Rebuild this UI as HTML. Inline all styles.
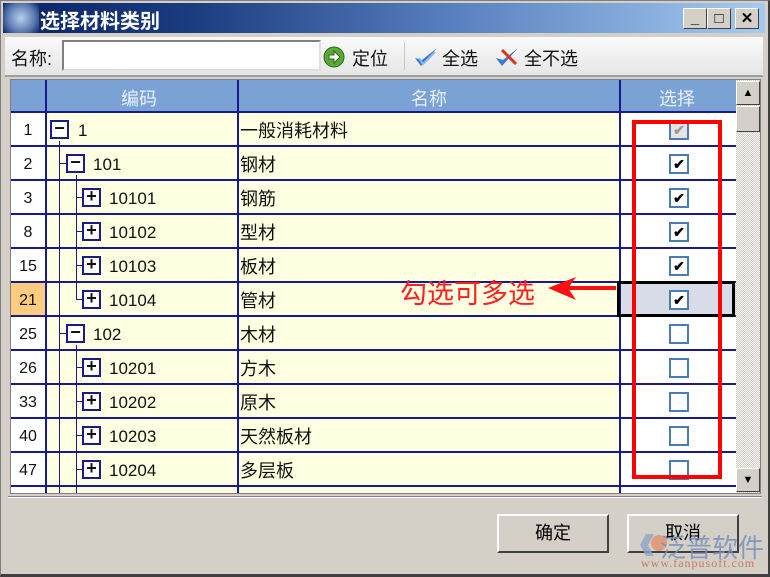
<!DOCTYPE html>
<html><head><meta charset="utf-8"><style>
*{margin:0;padding:0;box-sizing:border-box}
body{width:770px;height:577px;overflow:hidden;background:#d4d0c8;font-family:"Liberation Sans","Noto Sans CJK SC",sans-serif;position:relative}
.a{position:absolute}
#win{left:0;top:0;width:770px;height:577px;border:1px solid #808080;border-bottom:3px solid #404040;border-right:2px solid #404040;background:#d4d0c8}
#title{left:3px;top:3px;width:762px;height:30px;background:linear-gradient(90deg,#0a246a 0%,#1c3c80 25%,#5a82c0 60%,#a6caf0 100%)}
#title .t{left:37px;top:2px;color:#fff;font-weight:bold;font-size:20px}
.tb{width:24px;height:21px;top:6px;background:#d4d0c8;border:1px solid;border-color:#fff #404040 #404040 #fff;font-size:15px;font-weight:bold;text-align:center;line-height:19px;color:#000}
#tool{left:5px;top:37px;width:758px;height:40px;background:linear-gradient(#fafafa,#e6e6e6);border-bottom:2px solid #a0a0a0}
.tx{font-size:18px;color:#111}
#grid{left:10px;top:79px;width:751px;height:415px;background:#fff;overflow:hidden;border:1px solid #808080}
.row{position:absolute;left:0;width:725px;height:34px;border-bottom:2px solid #1a1a90}
.c{position:absolute;top:0;height:32px;line-height:36px;font-size:17px;color:#111}
.num{left:0;width:34px;background:#fff;text-align:center;font-size:16px}
.code{left:34px;width:192px;background:#ffffe2}
.name{left:226px;width:382px;background:#ffffe2;padding-left:3px;font-size:18px}
.sel{left:608px;width:117px;background:#fff}
.box{position:absolute;width:19px;height:19px;border:2px solid #1a1a90;background:#fff;top:7px;font-size:18px;line-height:13px;text-align:center;font-weight:bold;color:#111}
.cb{position:absolute;left:50px;top:7px;width:20px;height:20px;border:2px solid #4a7cb0;background:#fff;font-size:14px;line-height:16px;text-align:center;color:#000;font-weight:bold}
.tl{position:absolute;background:#1a1a90}
</style></head><body>
<div id="win" class="a"></div>
<div id="title" class="a">
 <div class="a" style="left:0;top:0;width:36px;height:30px;background:radial-gradient(circle at 50% 50%,#b8d0ea 0%,#5a78b0 60%,#0a246a 100%)"></div>
 <div class="a t">选择材料类别</div>
</div>
<div class="a tb" style="left:683px;top:8px">_</div>
<div class="a tb" style="left:707px;top:8px">□</div>
<div class="a tb" style="left:735px;top:8px">✕</div>
<div id="tool" class="a">
 <div class="a tx" style="left:6px;top:8px">名称:</div>
 <div class="a" style="left:57px;top:3px;width:259px;height:31px;background:#fff;border:2px solid;border-color:#808080 #e0e0e0 #e0e0e0 #808080"></div>
 <svg class="a" style="left:318px;top:9px" width="22" height="22" viewBox="0 0 22 22"><circle cx="11" cy="11" r="10" fill="#5aa838" stroke="#2a6a18"/><path d="M6 9h5V5l6 6-6 6v-4H6z" fill="#fff" stroke="#2a6a18"/></svg>
 <div class="a tx" style="left:347px;top:8px">定位</div>
 <div class="a" style="left:399px;top:5px;width:1px;height:28px;background:#c8c8c8"></div>
 <svg class="a" style="left:408px;top:9px" width="26" height="24" viewBox="0 0 26 24"><path d="M2 12l6 8L24 2 9 14z" fill="#3a78d0"/><path d="M6 12l4 6L22 6" stroke="#8ab8f0" stroke-width="2" fill="none"/></svg>
 <div class="a tx" style="left:437px;top:8px">全选</div>
 <svg class="a" style="left:489px;top:9px" width="26" height="24" viewBox="0 0 26 24"><path d="M2 12l6 8L24 2 9 14z" fill="#3a78d0"/><path d="M8 4l14 14" stroke="#e03020" stroke-width="3"/></svg>
 <div class="a tx" style="left:519px;top:8px">全不选</div>
</div>
<div id="grid" class="a">
 <div class="a" style="left:0;top:0;width:725px;height:33px;background:#7ba2d4;border-bottom:2px solid #1a1a90"></div>
 <div class="a" style="left:34px;top:0;width:2px;height:33px;background:#1a1a90"></div>
 <div class="a" style="left:226px;top:0;width:2px;height:33px;background:#1a1a90"></div>
 <div class="a" style="left:608px;top:0;width:2px;height:33px;background:#1a1a90"></div>
 <div class="a" style="left:110px;top:5px;color:#e8f0ff;font-size:18px">编码</div>
 <div class="a" style="left:400px;top:5px;color:#e8f0ff;font-size:18px">名称</div>
 <div class="a" style="left:648px;top:5px;color:#e8f0ff;font-size:18px">选择</div>

 <div class="row" style="top:33px"><div class="c num">1</div><div class="c code"><div class="box" style="left:5px">−</div><span style="position:absolute;left:33px">1</span></div><div class="c name">一般消耗材料</div><div class="c sel"><div class="cb" style="background:#e4e4e4;color:#999">✔</div></div></div>
 <div class="row" style="top:67px"><div class="c num">2</div><div class="c code"><div class="box" style="left:21px">−</div><span style="position:absolute;left:48px">101</span></div><div class="c name">钢材</div><div class="c sel"><div class="cb">✔</div></div></div>
 <div class="row" style="top:101px"><div class="c num">3</div><div class="c code"><div class="box" style="left:37px">+</div><span style="position:absolute;left:64px">10101</span></div><div class="c name">钢筋</div><div class="c sel"><div class="cb">✔</div></div></div>
 <div class="row" style="top:135px"><div class="c num">8</div><div class="c code"><div class="box" style="left:37px">+</div><span style="position:absolute;left:64px">10102</span></div><div class="c name">型材</div><div class="c sel"><div class="cb">✔</div></div></div>
 <div class="row" style="top:169px"><div class="c num">15</div><div class="c code"><div class="box" style="left:37px">+</div><span style="position:absolute;left:64px">10103</span></div><div class="c name">板材</div><div class="c sel"><div class="cb">✔</div></div></div>
 <div class="row" style="top:203px"><div class="c num" style="background:#ffcc80">21</div><div class="c code"><div class="box" style="left:37px">+</div><span style="position:absolute;left:64px">10104</span></div><div class="c name">管材</div><div class="c sel" style="background:#d8dce8"><div class="cb">✔</div></div></div>
 <div class="row" style="top:237px"><div class="c num">25</div><div class="c code"><div class="box" style="left:21px">−</div><span style="position:absolute;left:48px">102</span></div><div class="c name">木材</div><div class="c sel"><div class="cb"></div></div></div>
 <div class="row" style="top:271px"><div class="c num">26</div><div class="c code"><div class="box" style="left:37px">+</div><span style="position:absolute;left:64px">10201</span></div><div class="c name">方木</div><div class="c sel"><div class="cb"></div></div></div>
 <div class="row" style="top:305px"><div class="c num">33</div><div class="c code"><div class="box" style="left:37px">+</div><span style="position:absolute;left:64px">10202</span></div><div class="c name">原木</div><div class="c sel"><div class="cb"></div></div></div>
 <div class="row" style="top:339px"><div class="c num">40</div><div class="c code"><div class="box" style="left:37px">+</div><span style="position:absolute;left:64px">10203</span></div><div class="c name">天然板材</div><div class="c sel"><div class="cb"></div></div></div>
 <div class="row" style="top:373px"><div class="c num">47</div><div class="c code"><div class="box" style="left:37px">+</div><span style="position:absolute;left:64px">10204</span></div><div class="c name">多层板</div><div class="c sel"><div class="cb"></div></div></div>
 <div class="row" style="top:407px"><div class="c num"></div><div class="c code"></div><div class="c name"></div><div class="c sel"><div class="cb"></div></div></div>

 <div class="a" style="left:34px;top:33px;width:2px;height:390px;background:#1a1a90"></div>
 <div class="a" style="left:226px;top:33px;width:2px;height:390px;background:#1a1a90"></div>
 <div class="a" style="left:608px;top:33px;width:2px;height:390px;background:#1a1a90"></div>
 <div class="tl" style="left:48px;top:61px;width:1px;height:360px"></div>
 <div class="tl" style="left:48px;top:83px;width:7px;height:1px"></div>
 <div class="tl" style="left:48px;top:253px;width:7px;height:1px"></div>
 <div class="tl" style="left:65px;top:95px;width:1px;height:125px"></div>
 <div class="tl" style="left:65px;top:265px;width:1px;height:160px"></div>
 <div class="tl" style="left:65px;top:117px;width:6px;height:1px"></div>
 <div class="tl" style="left:65px;top:151px;width:6px;height:1px"></div>
 <div class="tl" style="left:65px;top:185px;width:6px;height:1px"></div>
 <div class="tl" style="left:65px;top:219px;width:6px;height:1px"></div>
 <div class="tl" style="left:65px;top:287px;width:6px;height:1px"></div>
 <div class="tl" style="left:65px;top:321px;width:6px;height:1px"></div>
 <div class="tl" style="left:65px;top:355px;width:6px;height:1px"></div>
 <div class="tl" style="left:65px;top:389px;width:6px;height:1px"></div>
 <div class="a" style="left:725px;top:0;width:25px;height:415px;background:repeating-conic-gradient(#d4d0c8 0 25%,#f4f4f4 0 50%) 0 0/2px 2px"></div>
 <div class="a" style="left:725px;top:1px;width:24px;height:24px;background:#d4d0c8;border:1px solid;border-color:#fff #404040 #404040 #fff;text-align:center;font-size:11px;line-height:22px">▲</div>
 <div class="a" style="left:725px;top:26px;width:24px;height:26px;background:#d4d0c8;border:1px solid;border-color:#fff #404040 #404040 #fff"></div>
 <div class="a" style="left:725px;top:388px;width:24px;height:24px;background:#d4d0c8;border:1px solid;border-color:#fff #404040 #404040 #fff;text-align:center;font-size:11px;line-height:22px">▼</div>
</div>
<div class="a" style="left:8px;top:496px;width:754px;height:2px;border-top:1px solid #808080;border-bottom:1px solid #fff"></div>
<div class="a" style="left:617px;top:281px;width:118px;height:36px;border:3px solid #000"></div>
<div class="a" style="left:632px;top:120px;width:90px;height:359px;border:4px solid #ff0000"></div>
<div class="a" style="left:400px;top:272px;color:#ff2020;font-size:27px;letter-spacing:0px">勾选可多选</div>
<svg class="a" style="left:546px;top:275px" width="72" height="28" viewBox="0 0 72 28"><path d="M70 13H20" stroke="#ff1010" stroke-width="4"/><path d="M2 13L30 2 22 13 30 25z" fill="#ff1010"/></svg>
<div class="a" style="left:497px;top:514px;width:112px;height:39px;background:#d4d0c8;border:2px solid;border-color:#fff #404040 #404040 #fff;text-align:center;line-height:35px;font-size:18px">确定</div>
<div class="a" style="left:627px;top:514px;width:112px;height:39px;background:#d4d0c8;border:2px solid;border-color:#fff #404040 #404040 #fff;text-align:center;line-height:35px;font-size:18px">取消</div>
<svg class="a" style="left:640px;top:530px" width="32" height="30" viewBox="0 0 32 30"><path d="M6 4L0 15l6 11h8L8 15l6-11z" fill="#8ca4c8" opacity=".8"/><circle cx="19" cy="13" r="8" fill="#e0906a" opacity=".8"/></svg>
<div class="a" style="left:660px;top:528px;color:#7a90b8;font-size:26px;opacity:.85">泛普软件</div>
<div class="a" style="left:641px;top:556px;color:#c87a60;font-size:12px;font-family:'Liberation Serif',serif;letter-spacing:1px">www.fanpusoft.com</div>
</body></html>
